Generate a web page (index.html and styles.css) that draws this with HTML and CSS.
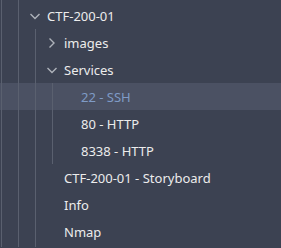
FILE: index.html
```html
<!DOCTYPE html>
<html lang="en">
<head>
  <meta charset="UTF-8" />
  <title>Explorer</title>
  <link rel="stylesheet" href="styles.css">
</head>
<body>

  <!-- tree -->
  <div class="tree">
    <div class="row spacer">
      <div class="guides"><span class="g"></span><span class="g"></span></div>
    </div>

    <div class="row">
      <div class="guides"><span class="g"></span><span class="g"></span></div>
      <span class="twistie"><svg width="16" height="16" viewBox="0 0 16 16"><path d="M3.5 6 L8 10.5 L12.5 6" /></svg></span>
      <span class="label">CTF-200-01</span>
    </div>

    <div class="row">
      <div class="guides"><span class="g"></span><span class="g"></span><span class="g"></span></div>
      <span class="twistie"><svg width="16" height="16" viewBox="0 0 16 16"><path d="M5.5 3.5 L10 8 L5.5 12.5" /></svg></span>
      <span class="label">images</span>
    </div>

    <div class="row">
      <div class="guides"><span class="g"></span><span class="g"></span><span class="g"></span></div>
      <span class="twistie"><svg width="16" height="16" viewBox="0 0 16 16"><path d="M3.5 6 L8 10.5 L12.5 6" /></svg></span>
      <span class="label">Services</span>
    </div>

    <div class="row selected">
      <div class="guides"><span class="g"></span><span class="g"></span><span class="g"></span><span class="g"></span></div>
      <span class="twistie"></span>
      <span class="label">22 - SSH</span>
    </div>

    <div class="row">
      <div class="guides"><span class="g"></span><span class="g"></span><span class="g"></span><span class="g"></span></div>
      <span class="twistie"></span>
      <span class="label">80 - HTTP</span>
    </div>

    <div class="row">
      <div class="guides"><span class="g"></span><span class="g"></span><span class="g"></span><span class="g"></span></div>
      <span class="twistie"></span>
      <span class="label">8338 - HTTP</span>
    </div>

    <div class="row">
      <div class="guides"><span class="g"></span><span class="g"></span><span class="g"></span></div>
      <span class="twistie"></span>
      <span class="label">CTF-200-01 - Storyboard</span>
    </div>

    <div class="row">
      <div class="guides"><span class="g"></span><span class="g"></span><span class="g"></span></div>
      <span class="twistie"></span>
      <span class="label">Info</span>
    </div>

    <div class="row">
      <div class="guides"><span class="g"></span><span class="g"></span><span class="g"></span></div>
      <span class="twistie"></span>
      <span class="label">Nmap</span>
    </div>

    <div class="row spacer">
      <div class="guides"><span class="g"></span><span class="g"></span><span class="g"></span></div>
    </div>
  </div>

</body>
</html>
```

FILE: styles.css
```css
body {
  font-family: 'Noto Sans', 'Open Sans', sans-serif;
  font-size: 13px;
  background-color: #3c4252;
  color: #ececec;
  margin: 0;
  height: 248px;
  overflow: hidden;
}

.tree {
  display: flex;
  flex-direction: column;
}

.row {
  display: flex;
  align-items: center;
  height: 27px;
}

.row.spacer {
  height: 2px;
}

.row.selected {
  background-color: #4b5163;
  color: #7f9bc6;
}

.guides {
  display: flex;
  align-self: stretch;
  padding-left: 1px;
  margin-right: -8px;
}

.g {
  width: 17px;
  box-sizing: border-box;
  border-left: 1px solid #5a606f;
}

.twistie {
  width: 16px;
  height: 16px;
  flex-shrink: 0;
}

.twistie svg {
  display: block;
}

.twistie path {
  fill: none;
  stroke: #aeb2ba;
  stroke-width: 1.4;
}

.label {
  margin-left: 4px;
  white-space: nowrap;
}
```
